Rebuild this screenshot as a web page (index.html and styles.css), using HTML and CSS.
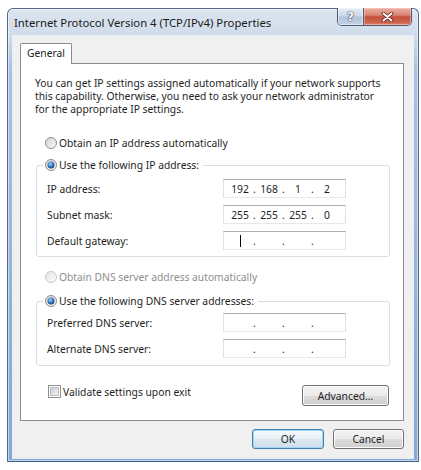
FILE: index.html
```html
<!DOCTYPE html>
<html>
<head>
<meta charset="utf-8">
<title>Internet Protocol Version 4 (TCP/IPv4) Properties</title>
<link rel="stylesheet" href="styles.css">
</head>
<body>
<svg class="defs" width="0" height="0" aria-hidden="true">
  <defs>
    <linearGradient id="rfill" x1="0" y1="0" x2="1" y2="1">
      <stop offset="0" stop-color="#cfd1d4"/>
      <stop offset="1" stop-color="#fbfbfb"/>
    </linearGradient>
    <linearGradient id="rfillDis" x1="0" y1="0" x2="1" y2="1">
      <stop offset="0" stop-color="#e6e6e6"/>
      <stop offset="1" stop-color="#fcfcfc"/>
    </linearGradient>
    <radialGradient id="rdot" cx="0.4" cy="0.35" r="0.7">
      <stop offset="0" stop-color="#a9dcfb"/>
      <stop offset="0.45" stop-color="#3b86cf"/>
      <stop offset="1" stop-color="#123d74"/>
    </radialGradient>
    <linearGradient id="cfill" x1="0" y1="0" x2="1" y2="1">
      <stop offset="0" stop-color="#c6cad0"/>
      <stop offset="1" stop-color="#f5f6f7"/>
    </linearGradient>
  </defs>
</svg>

<div class="window">
  <div class="titlebar">
    <span class="title">Internet Protocol Version 4 (TCP/IPv4) Properties</span>
    <div class="caption-buttons">
      <div class="cap-btn help">?</div>
      <div class="cap-btn close">
        <svg width="13" height="10" viewBox="0 0 13 10">
          <path d="M2.5 1.5 L10.5 8.5 M10.5 1.5 L2.5 8.5" stroke="#5a2219" stroke-width="3.6" stroke-linecap="round"/>
          <path d="M2.5 1.5 L10.5 8.5 M10.5 1.5 L2.5 8.5" stroke="#ffffff" stroke-width="2" stroke-linecap="round"/>
        </svg>
      </div>
    </div>
  </div>

  <div class="client">
    <div class="tabs">
      <div class="tab">General</div>
    </div>

    <div class="panel">
      <p class="intro">You can get IP settings assigned automatically if your network supports<br>this capability. Otherwise, you need to ask your network administrator<br>for the appropriate IP settings.</p>

      <div class="radio-row ip-auto">
        <svg class="radio" width="12" height="12" viewBox="0 0 12 12"><circle cx="6" cy="6" r="5.5" fill="url(#rfill)" stroke="#8b8d90"/></svg>
        <span>Obtain an IP address automatically</span>
      </div>

      <fieldset class="group group-ip">
        <legend class="legend">
          <svg class="radio" width="12" height="12" viewBox="0 0 12 12"><circle cx="6" cy="6" r="5.5" fill="url(#rfill)" stroke="#8b8d90"/><circle cx="6" cy="6" r="3.5" fill="url(#rdot)"/></svg>
          <span>Use the following IP address:</span>
        </legend>
        <div class="field-row first">
          <span class="lbl">IP address:</span>
          <div class="ipbox"><span class="seg">192</span><span class="dot">.</span><span class="seg">168</span><span class="dot">.</span><span class="seg">1</span><span class="dot">.</span><span class="seg">2</span></div>
        </div>
        <div class="field-row">
          <span class="lbl">Subnet mask:</span>
          <div class="ipbox"><span class="seg">255</span><span class="dot">.</span><span class="seg">255</span><span class="dot">.</span><span class="seg">255</span><span class="dot">.</span><span class="seg">0</span></div>
        </div>
        <div class="field-row">
          <span class="lbl">Default gateway:</span>
          <div class="ipbox"><span class="seg"><span class="caret"></span></span><span class="dot">.</span><span class="seg"></span><span class="dot">.</span><span class="seg"></span><span class="dot">.</span><span class="seg"></span></div>
        </div>
      </fieldset>

      <div class="radio-row dns-auto disabled">
        <svg class="radio" width="12" height="12" viewBox="0 0 12 12"><circle cx="6" cy="6" r="5.5" fill="url(#rfillDis)" stroke="#c3c5c8"/></svg>
        <span>Obtain DNS server address automatically</span>
      </div>

      <fieldset class="group group-dns">
        <legend class="legend">
          <svg class="radio" width="12" height="12" viewBox="0 0 12 12"><circle cx="6" cy="6" r="5.5" fill="url(#rfill)" stroke="#8b8d90"/><circle cx="6" cy="6" r="3.5" fill="url(#rdot)"/></svg>
          <span>Use the following DNS server addresses:</span>
        </legend>
        <div class="field-row first">
          <span class="lbl">Preferred DNS server:</span>
          <div class="ipbox"><span class="seg"></span><span class="dot">.</span><span class="seg"></span><span class="dot">.</span><span class="seg"></span><span class="dot">.</span><span class="seg"></span></div>
        </div>
        <div class="field-row">
          <span class="lbl">Alternate DNS server:</span>
          <div class="ipbox"><span class="seg"></span><span class="dot">.</span><span class="seg"></span><span class="dot">.</span><span class="seg"></span><span class="dot">.</span><span class="seg"></span></div>
        </div>
      </fieldset>

      <div class="bottom-row">
        <div class="check">
          <svg class="checkbox" width="13" height="13" viewBox="0 0 13 13"><rect x="0.5" y="0.5" width="12" height="12" fill="#fff" stroke="#8e8f8f"/><rect x="2.5" y="2.5" width="8" height="8" fill="url(#cfill)" stroke="#b9bdc3"/></svg>
          <span>Validate settings upon exit</span>
        </div>
        <button class="btn advanced">Advanced...</button>
      </div>
    </div>

    <div class="footer">
      <button class="btn ok default">OK</button>
      <button class="btn cancel">Cancel</button>
    </div>
  </div>
</div>
</body>
</html>
```

FILE: styles.css
```css
* {
  box-sizing: border-box;
}

html,
body {
  margin: 0;
  padding: 0;
  background: #ffffff;
}

body {
  font-family: "Noto Sans", "Open Sans", sans-serif;
  font-size: 10.3px;
  color: #1e1e1e;
}

.defs {
  display: block;
  width: 0;
  height: 0;
}

/* ---------- window frame ---------- */
.window {
  margin: 8px 0 0 7px;
  width: 412px;
  height: 454px;
  border: 1px solid #55698a;
  border-bottom-color: #3d5f8e;
  border-radius: 6px 6px 1px 1px;
  padding: 0 5px 3px;
  background: linear-gradient(#dce5f0, #d0dceb 27px, #a9c1df 60px, #86a8d4 100%);
  box-shadow: inset 0 0 0 1px rgba(255, 255, 255, 0.5);
  display: flex;
  flex-direction: column;
}

.titlebar {
  height: 27px;
  flex: none;
  display: flex;
  justify-content: space-between;
  align-items: flex-start;
}

.title {
  font-size: 11.3px;
  line-height: 27px;
  padding-left: 1px;
  color: #1a1a1a;
  white-space: nowrap;
}

.caption-buttons {
  display: flex;
  height: 18px;
  margin-top: -1px;
  margin-right: 1px;
  border: 1px solid #4b5d78;
  border-top: none;
  border-radius: 0 0 5px 5px;
  overflow: hidden;
}

.cap-btn {
  display: flex;
  align-items: center;
  justify-content: center;
  height: 100%;
}

.help {
  width: 26px;
  border-right: 1px solid #4b5d78;
  background: linear-gradient(#e6edf5, #cdd9e6 48%, #b1c3d8 52%, #c4d3e4);
  box-shadow: inset 0 0 0 1px rgba(255, 255, 255, 0.45);
  font-family: "DejaVu Sans", sans-serif;
  font-weight: bold;
  font-size: 12px;
  color: #f7f9fb;
  text-shadow: 0 0 1px #3e4f66, 0 0 1px #3e4f66, 0 0 2px #5a6b82;
}

.close {
  width: 47px;
  background: linear-gradient(#eab0a2, #da8471 42%, #c4503b 52%, #cf644c 85%, #e2866c);
  box-shadow: inset 0 0 0 1px rgba(255, 220, 210, 0.45);
}

/* ---------- client area ---------- */
.client {
  flex: 1;
  background: #f0f0f0;
  padding: 7px 9px 9px 7px;
  box-shadow: 0 0 0 1px #e9eff7;
  display: flex;
  flex-direction: column;
}

.tabs {
  display: flex;
  height: 20px;
  flex: none;
}

.tab {
  height: 21px;
  padding: 0 6px;
  border: 1px solid #898c95;
  border-bottom: none;
  border-radius: 2px 2px 0 0;
  background: #ffffff;
  line-height: 18px;
  position: relative;
  z-index: 1;
}

.panel {
  height: 358px;
  flex: none;
  border: 1px solid #898c95;
  background: #ffffff;
  padding: 13px 13px 0 14px;
}

.intro {
  margin: 0;
  line-height: 13px;
  white-space: nowrap;
}

.radio-row {
  display: flex;
  align-items: center;
  gap: 2px;
  height: 16px;
  padding-left: 10px;
}

.ip-auto {
  margin-top: 19px;
}

.dns-auto {
  margin-top: 12px;
}

.disabled {
  color: #8e8e8e;
}

.radio,
.checkbox {
  flex: none;
  display: block;
}

/* ---------- group boxes ---------- */
.group {
  margin: 0 0 0 1px;
  padding: 0 0 6px 0;
  border: 1px solid #d5dfe5;
  border-radius: 3px;
  min-width: 0;
}

.group-ip {
  margin-top: 6px;
}

.group-dns {
  margin-top: 8px;
  padding-bottom: 7px;
}

.legend {
  display: flex;
  align-items: center;
  gap: 2px;
  height: 16px;
  margin-left: 6px;
  padding: 0 4px 0 2px;
}

.field-row {
  display: flex;
  align-items: center;
  height: 19px;
  padding-left: 10px;
  margin-top: 7px;
}

.group-ip .field-row.first {
  margin-top: 6px;
}

.group-dns .field-row.first {
  margin-top: 4px;
}

.lbl {
  flex: 0 0 176px;
}

.ipbox {
  width: 123px;
  height: 19px;
  border: 1px solid;
  border-color: #abadb3 #dbdfe6 #e3e9ef #e2e3ea;
  background: #ffffff;
  display: flex;
  align-items: center;
  padding-left: 4px;
}

.seg {
  width: 24px;
  text-align: center;
  display: flex;
  justify-content: center;
  align-items: center;
}

.dot {
  width: 5px;
  text-align: center;
}

.caret {
  display: block;
  width: 1px;
  height: 12px;
  background: #000000;
}

/* ---------- bottom row ---------- */
.bottom-row {
  display: flex;
  justify-content: space-between;
  align-items: flex-start;
  margin-top: 19px;
}

.check {
  display: flex;
  align-items: center;
  gap: 2px;
  height: 13px;
  margin-left: 13px;
}

.btn {
  font: inherit;
  color: #1e1e1e;
  padding: 0;
  border: 1px solid #707070;
  border-radius: 3px;
  background: linear-gradient(#f2f2f2, #ebebeb 50%, #dddddd 50%, #cfcfcf);
  box-shadow: inset 0 0 0 1px #fcfcfc;
}

.advanced {
  width: 87px;
  height: 21px;
  margin-right: 1px;
}

.footer {
  display: flex;
  justify-content: flex-end;
  gap: 9px;
  margin-top: 8px;
}

.ok {
  width: 72px;
  height: 20px;
}

.cancel {
  width: 71px;
  height: 20px;
}

.default {
  border-color: #3c7fb1;
  box-shadow: inset 0 0 0 1px #9fd8f3;
  background: linear-gradient(#f3f8fb, #eaf2f7 50%, #dbe7ef 50%, #cfdfea);
}
```
